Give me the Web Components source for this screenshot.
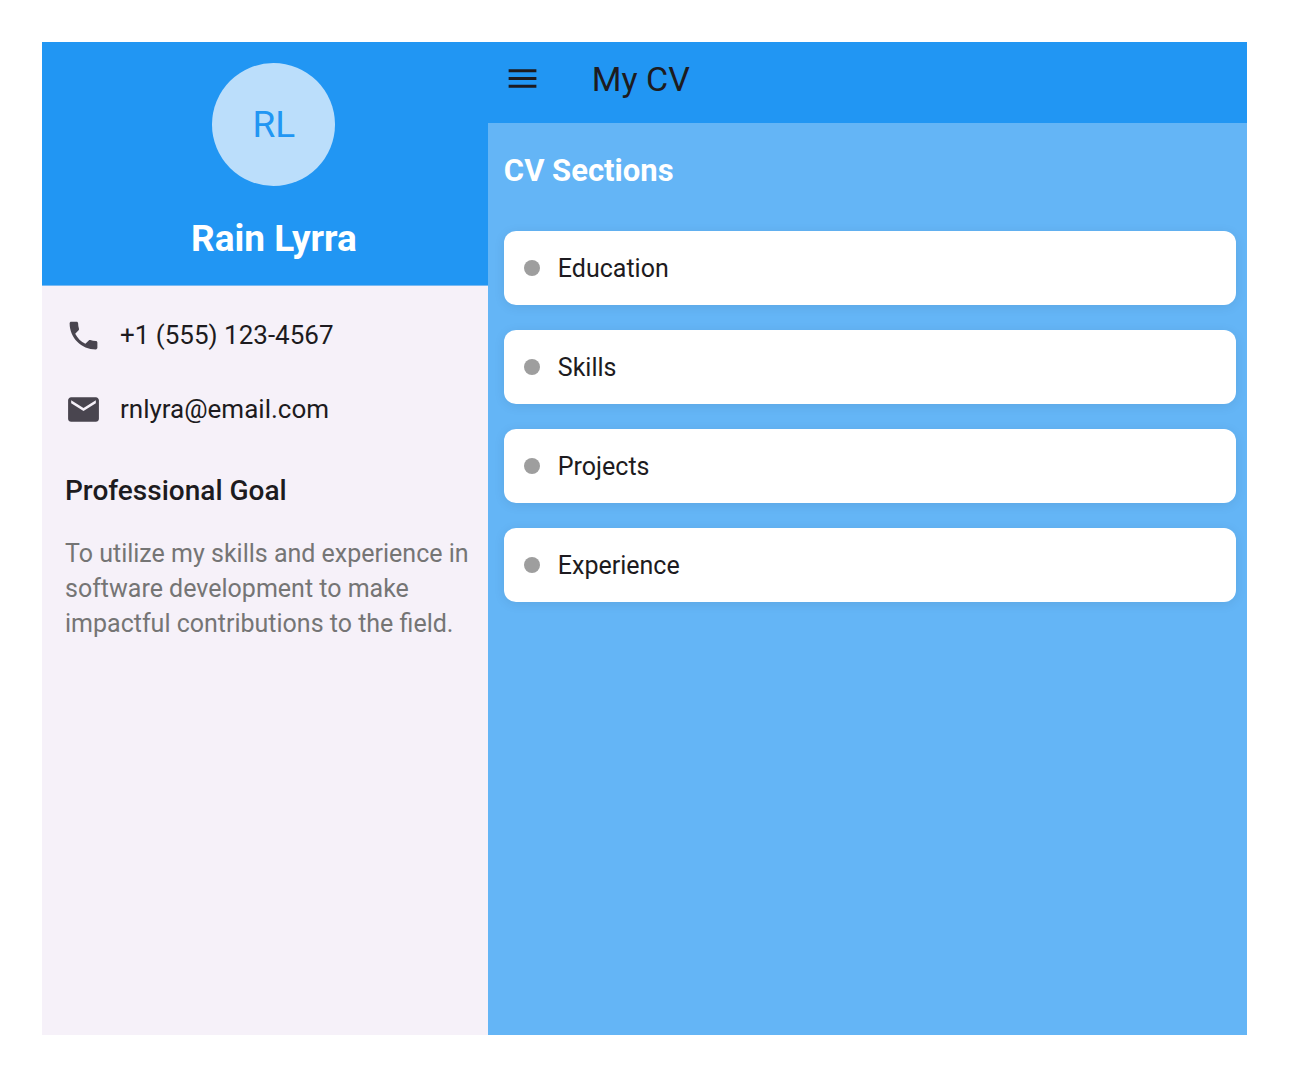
<!DOCTYPE html>
<html lang="en">
<head>
<meta charset="utf-8">
<meta name="viewport" content="width=device-width, initial-scale=1">
<title>My CV</title>
<style>
  html { background: #fff; }
  body { margin: 0; font-family: Roboto, sans-serif; font-size: 25px; color: #1d1b20; }
</style>
</head>
<body>
<cv-app>
  <cv-drawer slot="drawer" name="Rain Lyrra" initials="RL">
    <cv-contact icon="phone" href="tel:+15551234567">+1 (555) 123-4567</cv-contact>
    <cv-contact icon="mail" href="mailto:rnlyra@email.com">rnlyra@email.com</cv-contact>
    <cv-goal heading="Professional Goal">To utilize my skills and experience in software development to make impactful contributions to the field.</cv-goal>
  </cv-drawer>
  <cv-bar slot="bar">My CV</cv-bar>
  <cv-sections heading="CV Sections">
    <cv-tile>Education</cv-tile>
    <cv-tile>Skills</cv-tile>
    <cv-tile>Projects</cv-tile>
    <cv-tile>Experience</cv-tile>
  </cv-sections>
</cv-app>
<script>
  const define = (name, render) => customElements.define(name, class extends HTMLElement {
    connectedCallback() {
      if (this.shadowRoot) return;
      const template = document.createElement('template');
      template.innerHTML = '<style>*{box-sizing:border-box}</style>' + render(this);
      this.attachShadow({ mode: 'open' }).append(template.content.cloneNode(true));
    }
  });

  define('cv-app', () => `
    <style>
      :host { display: flex; box-sizing: border-box; min-height: 100vh; padding: 42px 56px 45px 42px; }
      aside { display: flex; flex: 0 0 37%; background: #f6f1f9; }
      .page { display: flex; flex: 1; min-width: 0; flex-direction: column; background: #64b5f6; }
    </style>
    <aside><slot name="drawer"></slot></aside>
    <div class="page"><slot name="bar"></slot><slot></slot></div>`);

  define('cv-drawer', el => `
    <style>
      :host { display: block; flex: 1; min-width: 0; }
      header { display: flex; flex-direction: column; align-items: center; gap: 31px;
        padding: 21px 6px 24px 24px; background: #2196f3; border-bottom: 1px solid #79b9f2; }
      .avatar { display: flex; align-items: center; justify-content: center; width: 123px; height: 123px;
        border-radius: 50%; background: #bbdefb; color: #2196f3; font-size: 37px; line-height: 44px; }
      h1 { margin: 0; color: #fff; font-size: 37px; line-height: 44px; font-weight: 700; }
      .body { padding: 12px 0 24px 23px; }
    </style>
    <header><div class="avatar">${el.getAttribute('initials')}</div><h1>${el.getAttribute('name')}</h1></header>
    <div class="body"><slot></slot></div>`);

  const icons = {
    phone: 'M6.62 10.79c1.44 2.83 3.76 5.14 6.59 6.59l2.2-2.2c.27-.27.67-.36 1.02-.24 1.12.37 2.33.57 3.57.57.55 0 1 .45 1 1V20c0 .55-.45 1-1 1-9.39 0-17-7.61-17-17 0-.55.45-1 1-1h3.5c.55 0 1 .45 1 1 0 1.25.2 2.45.57 3.57.11.35.03.74-.25 1.02l-2.2 2.2z',
    mail: 'M20 4H4c-1.1 0-1.99.9-1.99 2L2 18c0 1.1.9 2 2 2h16c1.1 0 2-.9 2-2V6c0-1.1-.9-2-2-2zm0 4l-8 5-8-5V6l8 5 8-5v2z'
  };

  define('cv-contact', el => `
    <style>
      :host { display: block; }
      a { display: flex; align-items: center; gap: 18px; height: 74px; color: #1d1b20; font-size: 26px; text-decoration: none; }
      svg { flex: none; width: 37px; height: 37px; fill: #49454f; }
    </style>
    <a href="${el.getAttribute('href')}">
      <svg viewBox="0 0 24 24" aria-hidden="true"><path d="${icons[el.getAttribute('icon')]}"/></svg>
      <span><slot></slot></span>
    </a>`);

  define('cv-goal', el => `
    <style>
      :host { display: block; padding-top: 28px; }
      h2 { margin: 0 0 28px; font-size: 28px; line-height: 34px; font-weight: 500; }
      p { margin: 0; color: #757575; line-height: 35px; }
    </style>
    <h2>${el.getAttribute('heading')}</h2>
    <p><slot></slot></p>`);

  define('cv-bar', () => `
    <style>
      :host { display: flex; box-sizing: border-box; align-items: center; gap: 51px; height: 81px; padding: 0 16px 8px; background: #2196f3; }
      button { display: flex; padding: 0; border: 0; background: none; color: inherit; cursor: pointer; }
      svg { width: 37px; height: 37px; fill: currentColor; }
      h1 { margin: 0; font-size: 34px; line-height: 40px; font-weight: 400; }
    </style>
    <button type="button" aria-label="Open navigation menu">
      <svg viewBox="0 0 24 24" aria-hidden="true"><path d="M3 18h18v-2H3v2zm0-5h18v-2H3v2zm0-7v2h18V6H3z"/></svg>
    </button>
    <h1><slot></slot></h1>`);

  define('cv-sections', el => `
    <style>
      :host { display: block; padding: 29px 11px 24px 16px; }
      h2 { margin: 0 0 41px; color: #fff; font-size: 31px; line-height: 38px; font-weight: 700; }
      nav { display: flex; flex-direction: column; gap: 25px; }
    </style>
    <h2>${el.getAttribute('heading')}</h2>
    <nav><slot></slot></nav>`);

  define('cv-tile', () => `
    <style>
      :host { display: block; }
      button { display: flex; align-items: center; gap: 18px; width: 100%; height: 74px; padding: 0 20px;
        border: 0; border-radius: 12px; background: #fff; box-shadow: 0 2px 12px rgb(0 0 0 / 8%);
        font: inherit; color: inherit; text-align: left; cursor: pointer; }
      i { width: 16px; height: 16px; border-radius: 50%; background: #9e9e9e; }
    </style>
    <button type="button"><i></i><span><slot></slot></span></button>`);
</script>
</body>
</html>
